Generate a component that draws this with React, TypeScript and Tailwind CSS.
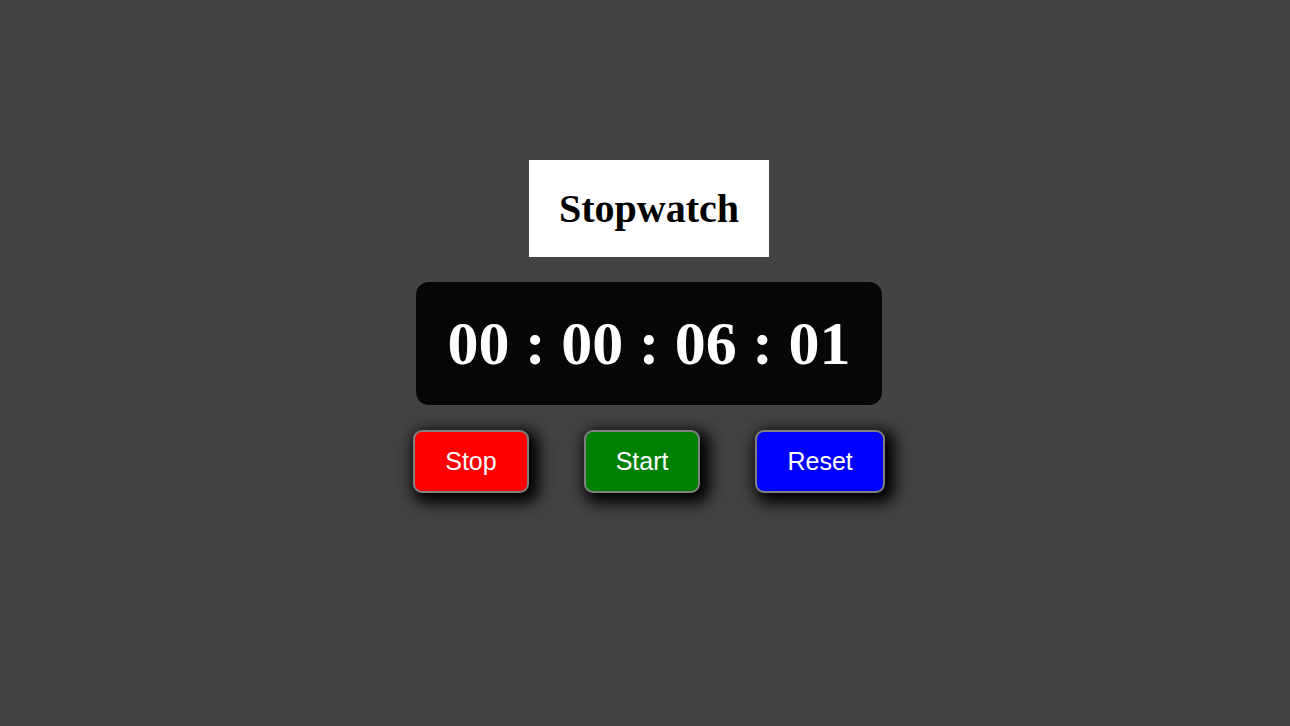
import React from "react";

type ControlProps = { label: string; color: string; onClick: () => void };

function Control({ label, color, onClick }: ControlProps) {
  return (
    <button
      type="button"
      onClick={onClick}
      className={`rounded-[9px] border-2 border-[#808080] px-[30px] py-[15px] font-['Liberation_Sans',Arial,sans-serif] text-[25px] leading-[29px] text-white shadow-[5px_5px_15px_5px_#000000] ${color}`}
    >
      {label}
    </button>
  );
}

const pad = (n: number) => String(n).padStart(2, "0");

export default function App() {
  const [ticks, setTicks] = React.useState(601);
  const [running, setRunning] = React.useState(false);

  React.useEffect(() => {
    if (!running) return;
    const id = window.setInterval(() => setTicks((t) => t + 1), 10);
    return () => window.clearInterval(id);
  }, [running]);

  const time = [
    Math.floor(ticks / 360000),
    Math.floor(ticks / 6000) % 60,
    Math.floor(ticks / 100) % 60,
    ticks % 100,
  ]
    .map(pad)
    .join(" : ");

  return (
    <main className="flex min-h-screen flex-col items-center bg-[#434343] pt-40 pl-2 font-['Liberation_Serif','Times_New_Roman',serif]">
      <h1 className="bg-white px-[30px] py-[25px] text-[40px] leading-[47px] font-bold text-black">
        Stopwatch
      </h1>
      <div
        role="timer"
        className="mt-[25px] rounded-[13px] bg-[#060606] px-8 py-[25px] text-[62px] leading-[73px] font-bold whitespace-nowrap text-white"
      >
        {time}
      </div>
      <div className="mt-[25px] flex gap-[55px]">
        <Control label="Stop" color="bg-[#ff0000]" onClick={() => setRunning(false)} />
        <Control label="Start" color="bg-[#008000]" onClick={() => setRunning(true)} />
        <Control
          label="Reset"
          color="bg-[#0000ff]"
          onClick={() => {
            setRunning(false);
            setTicks(0);
          }}
        />
      </div>
    </main>
  );
}
